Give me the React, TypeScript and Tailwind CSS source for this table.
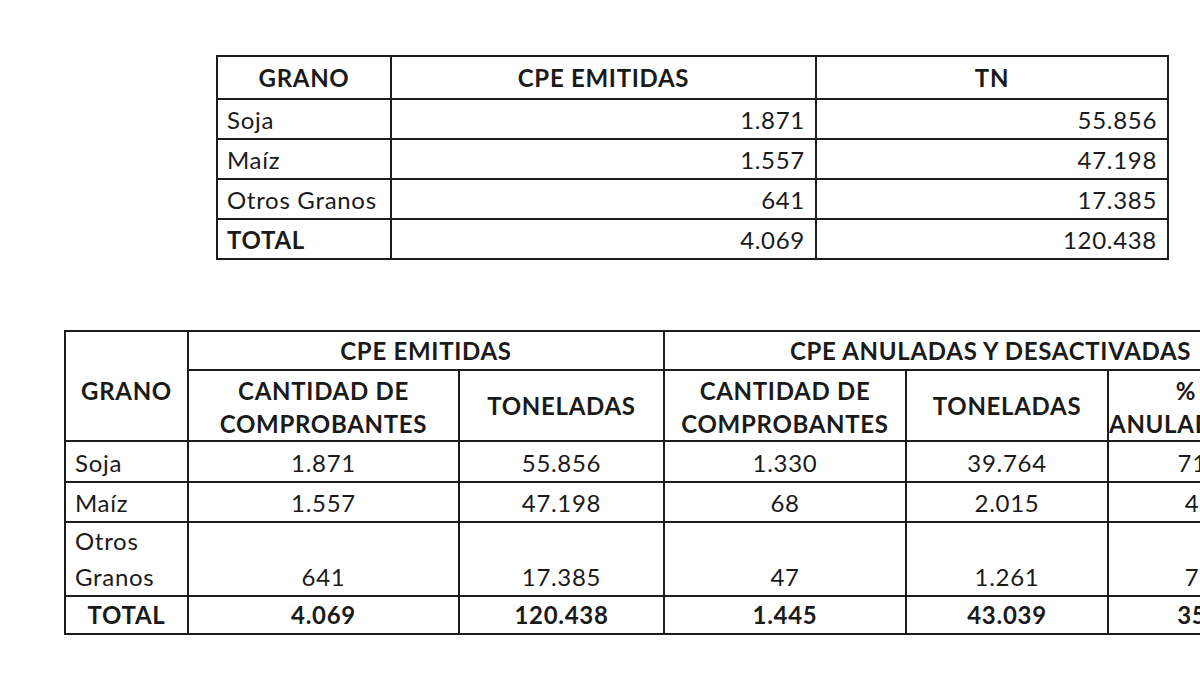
const resumen = [
  { grano: 'Soja', cpe: '1.871', tn: '55.856' },
  { grano: 'Maíz', cpe: '1.557', tn: '47.198' },
  { grano: 'Otros Granos', cpe: '641', tn: '17.385' },
]

const detalle = [
  { grano: 'Soja', cant: '1.871', ton: '55.856', anCant: '1.330', anTon: '39.764', pct: '71,2%', h: 'h-[41px]' },
  { grano: 'Maíz', cant: '1.557', ton: '47.198', anCant: '68', anTon: '2.015', pct: '4,3%', h: 'h-[40px]' },
  { grano: 'Otros Granos', cant: '641', ton: '17.385', anCant: '47', anTon: '1.261', pct: '7,3%', h: 'h-[74px]' },
]

const cell = 'border-2 border-[#1c1c1c] p-0'

export default function App() {
  return (
    <div className="h-[675px] w-[1200px] overflow-hidden bg-white text-[#1a1a1a] tracking-[0.7px] [font-family:Lato,'Open_Sans',sans-serif]">
      {/* Tabla resumen */}
      <div className="pl-[216px] pt-[55px]">
        <table className="table-fixed border-collapse text-[24px] leading-none">
          <colgroup>
            <col className="w-[174px]" />
            <col className="w-[425px]" />
            <col className="w-[352px]" />
          </colgroup>
          <thead>
            <tr className="h-[43px]">
              <th className={`${cell} text-center font-bold`}>GRANO</th>
              <th className={`${cell} text-center font-bold`}>CPE EMITIDAS</th>
              <th className={`${cell} text-center font-bold`}>TN</th>
            </tr>
          </thead>
          <tbody>
            {resumen.map((r) => (
              <tr key={r.grano} className="h-[40px]">
                <td className={`${cell} pl-[9px] align-bottom pb-[6px]`}>{r.grano}</td>
                <td className={`${cell} pr-[10px] text-right align-bottom pb-[6px]`}>{r.cpe}</td>
                <td className={`${cell} pr-[10px] text-right align-bottom pb-[6px]`}>{r.tn}</td>
              </tr>
            ))}
            <tr className="h-[40px]">
              <td className={`${cell} pl-[9px] font-bold align-bottom pb-[6px]`}>TOTAL</td>
              <td className={`${cell} pr-[10px] text-right align-bottom pb-[6px]`}>4.069</td>
              <td className={`${cell} pr-[10px] text-right align-bottom pb-[6px]`}>120.438</td>
            </tr>
          </tbody>
        </table>
      </div>

      {/* Tabla detalle */}
      <div className="pl-[64px] pt-[70px]">
        <table className="w-[1252px] table-fixed border-collapse text-[24px] leading-[36px]">
          <colgroup>
            <col className="w-[123px]" />
            <col className="w-[271px]" />
            <col className="w-[205px]" />
            <col className="w-[242px]" />
            <col className="w-[202px]" />
            <col className="w-[209px]" />
          </colgroup>
          <thead className="leading-[33px]">
            <tr className="h-[39px]">
              <th rowSpan={2} className={`${cell} pt-[8px] text-center font-bold`}>GRANO</th>
              <th colSpan={2} className={`${cell} text-center font-bold`}>CPE EMITIDAS</th>
              <th colSpan={3} className={`${cell} text-center font-bold`}>CPE ANULADAS Y DESACTIVADAS</th>
            </tr>
            <tr className="h-[71px]">
              <th className={`${cell} pt-[2px] text-center font-bold`}>CANTIDAD DE<br />COMPROBANTES</th>
              <th className={`${cell} text-center font-bold`}>TONELADAS</th>
              <th className={`${cell} pt-[2px] text-center font-bold`}>CANTIDAD DE<br />COMPROBANTES</th>
              <th className={`${cell} text-center font-bold`}>TONELADAS</th>
              <th className={`${cell} pt-[2px] text-center font-bold whitespace-nowrap`}>% CPE<br />ANULADAS/EMIT.</th>
            </tr>
          </thead>
          <tbody>
            {detalle.map((r) => (
              <tr key={r.grano} className={r.h}>
                <td className={`${cell} pl-[9px] pr-[4px] align-bottom`}>{r.grano}</td>
                <td className={`${cell} text-center align-bottom`}>{r.cant}</td>
                <td className={`${cell} text-center align-bottom`}>{r.ton}</td>
                <td className={`${cell} text-center align-bottom`}>{r.anCant}</td>
                <td className={`${cell} text-center align-bottom`}>{r.anTon}</td>
                <td className={`${cell} text-center align-bottom`}>{r.pct}</td>
              </tr>
            ))}
            <tr className="h-[37px] font-bold">
              <td className={`${cell} text-center`}>TOTAL</td>
              <td className={`${cell} text-center`}>4.069</td>
              <td className={`${cell} text-center`}>120.438</td>
              <td className={`${cell} text-center`}>1.445</td>
              <td className={`${cell} text-center`}>43.039</td>
              <td className={`${cell} text-center`}>35,7%</td>
            </tr>
          </tbody>
        </table>
      </div>
    </div>
  )
}
